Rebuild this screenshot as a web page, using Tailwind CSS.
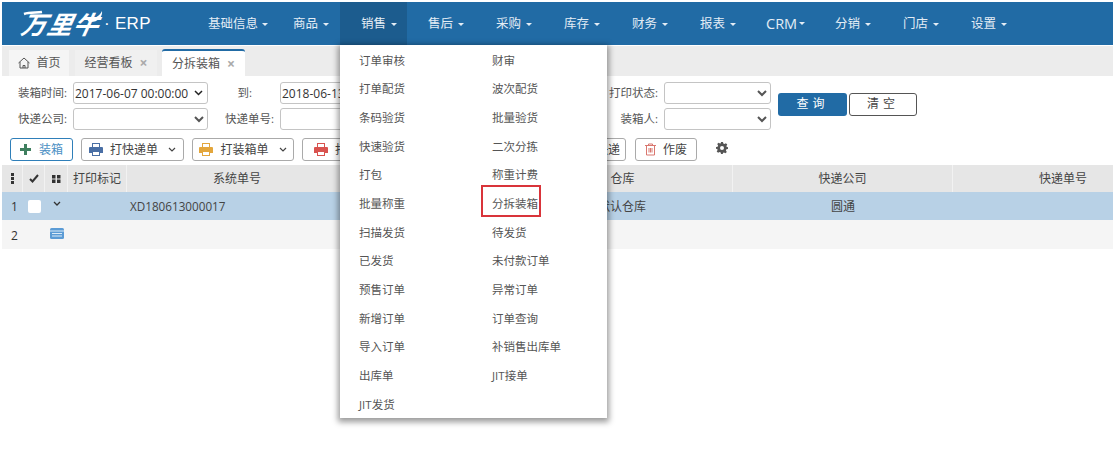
<!doctype html>
<html lang="zh-CN">
<head>
<meta charset="utf-8">
<title>ERP</title>
<script src="https://cdn.jsdelivr.net/npm/@tailwindcss/browser@4"></script>
</head>
<body class="bg-white">
<div class="relative h-[455px] w-[1113px] overflow-hidden pt-[2px] pl-[2px] font-['Open_Sans','Noto_Sans_CJK_SC',sans-serif] text-[12px] text-[#555]">

  <!-- top nav -->
  <header class="flex h-[43px] bg-[#216ba5] text-[12.5px] text-[#e4edf5]">
    <div class="flex w-[185px] items-center pl-[20px] text-white">
      <div class="relative h-[32px] w-[80px]">
        <span class="block -skew-x-12 pt-[2px] text-[25px] leading-[28px] font-bold tracking-[1px] italic">万里牛</span>
        <svg class="absolute top-0 left-0" width="84" height="26" viewBox="0 0 84 26" fill="none" aria-hidden="true">
          <path d="M2 6c6-2 13-1 18-2" stroke="#fff" stroke-width="2.5"/>
          <path d="M64 10c7 2 13-1 16-7c1 6-5 12-13 11" fill="#fff"/>
        </svg>
      </div>
      <span class="ml-[2px] font-['Liberation_Sans'] text-[17px] tracking-[0.3px]">· ERP</span>
    </div>
    <a class="flex w-[85px] items-center pt-[2px] pl-[21px]">基础信息<i class="ml-[4px] h-0 w-0 border-x-[3px] border-t-[3px] border-x-transparent border-t-[#e4edf5]"></i></a>
    <a class="flex w-[68px] items-center pt-[2px] pl-[21px]">商品<i class="ml-[5px] h-0 w-0 border-x-[3px] border-t-[3px] border-x-transparent border-t-[#e4edf5]"></i></a>
    <a class="flex w-[67px] items-center bg-[#1c5c8e] pt-[2px] pl-[21px]">销售<i class="ml-[5px] h-0 w-0 border-x-[3px] border-t-[3px] border-x-transparent border-t-[#e4edf5]"></i></a>
    <a class="flex w-[68px] items-center pt-[2px] pl-[21px]">售后<i class="ml-[5px] h-0 w-0 border-x-[3px] border-t-[3px] border-x-transparent border-t-[#e4edf5]"></i></a>
    <a class="flex w-[68px] items-center pt-[2px] pl-[21px]">采购<i class="ml-[5px] h-0 w-0 border-x-[3px] border-t-[3px] border-x-transparent border-t-[#e4edf5]"></i></a>
    <a class="flex w-[68px] items-center pt-[2px] pl-[21px]">库存<i class="ml-[5px] h-0 w-0 border-x-[3px] border-t-[3px] border-x-transparent border-t-[#e4edf5]"></i></a>
    <a class="flex w-[68px] items-center pt-[2px] pl-[21px]">财务<i class="ml-[5px] h-0 w-0 border-x-[3px] border-t-[3px] border-x-transparent border-t-[#e4edf5]"></i></a>
    <a class="flex w-[66px] items-center pt-[2px] pl-[21px]">报表<i class="ml-[5px] h-0 w-0 border-x-[3px] border-t-[3px] border-x-transparent border-t-[#e4edf5]"></i></a>
    <a class="flex w-[69px] items-center pl-[21px]"><span class="text-[14.5px]">CRM</span><i class="ml-[2px] h-0 w-0 border-x-[3px] border-t-[3px] border-x-transparent border-t-[#e4edf5]"></i></a>
    <a class="flex w-[68px] items-center pt-[2px] pl-[21px]">分销<i class="ml-[5px] h-0 w-0 border-x-[3px] border-t-[3px] border-x-transparent border-t-[#e4edf5]"></i></a>
    <a class="flex w-[68px] items-center pt-[2px] pl-[21px]">门店<i class="ml-[5px] h-0 w-0 border-x-[3px] border-t-[3px] border-x-transparent border-t-[#e4edf5]"></i></a>
    <a class="flex w-[68px] items-center pt-[2px] pl-[21px]">设置<i class="ml-[5px] h-0 w-0 border-x-[3px] border-t-[3px] border-x-transparent border-t-[#e4edf5]"></i></a>
  </header>

  <!-- tabs -->
  <div class="mt-[1px] flex h-[30px] items-end bg-[#ececec] pl-[7px]">
    <div class="flex h-[26px] w-[60px] items-center justify-center gap-[5px] bg-[#f5f5f5]">
      <svg width="14" height="14" viewBox="0 0 14 14" fill="none" stroke="#555" stroke-width="1" aria-hidden="true"><path d="M1.5 7 7 2l5.500 5M3 6v6h8V6M6 12V9.500h2V12"/></svg>
      <span>首页</span>
    </div>
    <div class="ml-[6px] flex h-[26px] w-[82px] items-center justify-center gap-[7px] bg-[#f0f0f0]">
      <span>经营看板</span><span class="text-[14px] leading-none font-bold text-[#aaa]">×</span>
    </div>
    <div class="ml-[5px] flex h-[27px] w-[83px] items-center justify-center gap-[7px] rounded-t-[3px] border-t-2 border-[#216ba5] bg-white">
      <span>分拆装箱</span><span class="text-[14px] leading-none font-bold text-[#aaa]">×</span>
    </div>
  </div>

  <!-- filters -->
  <div class="mt-[6px] flex items-center">
    <div class="grid grid-cols-[71px_135px_72px_135px_249px_107px] items-center gap-y-[4px] text-[11.5px] leading-[22px]">
      <label class="pr-[6px] text-right">装箱时间:</label>
      <div class="relative">
        <select class="block h-[22px] w-full appearance-none rounded-[3px] border border-[#c4c4c4] bg-white pl-[1px] text-[12px] text-[#333]"><option>2017-06-07 00:00:00</option></select>
        <svg class="pointer-events-none absolute top-[8px] right-[5px]" width="9" height="6" viewBox="0 0 9 6" fill="none" stroke="#222" stroke-width="1.500" aria-hidden="true"><path d="M1 1l3.500 3.500L8 1"/></svg>
      </div>
      <label class="pr-[28px] text-right">到:</label>
      <select class="block h-[22px] w-full appearance-none rounded-[3px] border border-[#c4c4c4] bg-white pl-[1px] text-[12px] text-[#333]"><option>2018-06-13 00:00:00</option></select>
      <label class="pr-[6px] text-right">打印状态:</label>
      <select class="h-[22px] rounded-[3px] border border-[#c4c4c4] bg-white"><option></option></select>
      <label class="pr-[6px] text-right">快递公司:</label>
      <select class="h-[22px] rounded-[3px] border border-[#c4c4c4] bg-white"><option></option></select>
      <label class="pr-[6px] text-right">快递单号:</label>
      <input class="h-[22px] rounded-[3px] border border-[#c4c4c4] bg-white">
      <label class="pr-[6px] text-right">装箱人:</label>
      <select class="h-[22px] rounded-[3px] border border-[#c4c4c4] bg-white"><option></option></select>
    </div>
    <button class="mt-[-4px] ml-[7px] h-[23px] w-[69px] rounded-[3px] bg-[#216ba5] tracking-[4px] text-white">查询</button>
    <button class="mt-[-4px] ml-[2px] h-[23px] w-[68px] rounded-[3px] border border-[#555] bg-white tracking-[4px] text-[#444]">清空</button>
  </div>

  <!-- toolbar -->
  <div class="mt-[8px] flex h-[23px] items-center pl-[8px] text-[#444]">
    <button class="flex h-[23px] w-[63px] items-center justify-center gap-[8px] rounded-[3px] border border-[#2f7fb9] text-[#4a8fc4]">
      <svg width="11" height="11" viewBox="0 0 11 11" aria-hidden="true"><path fill="#3f7f5f" d="M4 0h3v4h4v3H7v4H4V7H0V4h4z"/></svg>
      <span>装箱</span>
    </button>
    <button class="ml-[8px] flex h-[23px] w-[103px] items-center justify-center gap-[7px] rounded-[3px] border border-[#aaa]">
      <svg width="14" height="13" viewBox="0 0 14 13" aria-hidden="true"><path fill="#4a6fa5" d="M3 0h8v4h2a1 1 0 0 1 1 1v5h-3v3H3v-3H0V5a1 1 0 0 1 1-1h2zm1 1v3h6V1zm0 8v3h6V9z"/></svg>
      <span>打快递单</span>
      <svg class="ml-[3px]" width="8" height="5" viewBox="0 0 8 5" fill="none" stroke="#444" stroke-width="1.200" aria-hidden="true"><path d="M1 1l3 3 3-3"/></svg>
    </button>
    <button class="ml-[8px] flex h-[23px] w-[102px] items-center justify-center gap-[7px] rounded-[3px] border border-[#aaa]">
      <svg width="14" height="13" viewBox="0 0 14 13" aria-hidden="true"><path fill="#e3a63c" d="M3 0h8v4h2a1 1 0 0 1 1 1v5h-3v3H3v-3H0V5a1 1 0 0 1 1-1h2zm1 1v3h6V1zm0 8v3h6V9z"/></svg>
      <span>打装箱单</span>
      <svg class="ml-[3px]" width="8" height="5" viewBox="0 0 8 5" fill="none" stroke="#444" stroke-width="1.200" aria-hidden="true"><path d="M1 1l3 3 3-3"/></svg>
    </button>
    <button class="ml-[8px] flex h-[23px] w-[108px] items-center gap-[7px] rounded-[3px] border border-[#aaa] pl-[11px]">
      <svg width="14" height="13" viewBox="0 0 14 13" aria-hidden="true"><path fill="#d9534f" d="M3 0h8v4h2a1 1 0 0 1 1 1v5h-3v3H3v-3H0V5a1 1 0 0 1 1-1h2zm1 1v3h6V1zm0 8v3h6V9z"/></svg>
      <span>打印</span>
    </button>
    <button class="ml-[8px] flex h-[23px] w-[208px] items-center justify-end rounded-[3px] border border-[#aaa] pr-[5px]">更换快递</button>
    <button class="ml-[9px] flex h-[23px] w-[62px] items-center justify-center gap-[7px] rounded-[3px] border border-[#aaa]">
      <svg width="11" height="13" viewBox="0 0 11 13" fill="none" stroke="#d9776f" stroke-width="1" aria-hidden="true"><path d="M0 2.500h11M3.500 2.500V1h4v1.500M1.500 2.500V12h8V2.500M4 5v4.500M5.500 5v4.500M7 5v4.500"/></svg>
      <span>作废</span>
    </button>
    <svg class="mt-[-4px] ml-[19px]" width="12" height="12" viewBox="0 0 12 12" aria-hidden="true"><path fill="#555" fill-rule="evenodd" d="M5 0h2l.3 1.600 1.200.5L9.900 1.200l1.400 1.400-.9 1.400.5 1.200L12 5v2l-1.600.3-.5 1.200.9 1.400-1.400 1.400-1.400-.9-1.200.5L7 12H5l-.3-1.600-1.200-.5-1.400.9L.7 9.400l.9-1.400-.5-1.200L0 7V5l1.600-.3.5-1.200-.9-1.400L2.600.7 4 1.600l.8-.4zM6 4a2 2 0 1 0 0 4 2 2 0 0 0 0-4z"/></svg>
  </div>

  <!-- table -->
  <div class="mt-[4px] w-[1171px] text-[#444]">
    <div class="flex h-[27px] items-center bg-[#e6e6e6] text-center">
      <div class="flex h-full w-[21px] items-center justify-center border-r border-[#f2f2f2]">
        <svg width="3" height="11" viewBox="0 0 3 11" aria-hidden="true"><path fill="#333" d="M0 0h3v3H0zM0 4h3v3H0zM0 8h3v3H0z"/></svg>
      </div>
      <div class="flex h-full w-[22px] items-center justify-center border-r border-[#f2f2f2]">
        <svg width="10" height="9" viewBox="0 0 10 9" fill="none" stroke="#333" stroke-width="2" aria-hidden="true"><path d="M1 5l2.500 2.500L9 1"/></svg>
      </div>
      <div class="flex h-full w-[23px] items-center justify-center border-r border-[#f2f2f2]">
        <svg width="9" height="8" viewBox="0 0 9 8" aria-hidden="true"><path fill="#333" d="M0 0h3.500v3.500H0zM5 0h3.500v3.500H5zM0 4.500h3.500V8H0zM5 4.500h3.500V8H5z"/></svg>
      </div>
      <div class="flex h-full w-[59px] items-center justify-center border-r border-[#f2f2f2]">打印标记</div>
      <div class="flex h-full w-[221px] items-center justify-center border-r border-[#f2f2f2]">系统单号</div>
      <div class="h-full w-[165px] border-r border-[#f2f2f2]"></div>
      <div class="flex h-full w-[220px] items-center justify-center border-r border-[#f2f2f2]">仓库</div>
      <div class="flex h-full w-[220px] items-center justify-center border-r border-[#f2f2f2]">快递公司</div>
      <div class="flex h-full w-[220px] items-center justify-center">快递单号</div>
    </div>
    <div class="flex h-[28px] items-center bg-[#b8d1e6]">
      <div class="w-[21px] pt-[2px] pl-[9px] text-[#333]">1</div>
      <div class="flex w-[22px] justify-center"><span class="h-[13px] w-[13px] rounded-[2px] bg-white"></span></div>
      <div class="flex w-[23px] justify-center pb-[5px]">
        <svg width="8" height="5" viewBox="0 0 8 5" fill="none" stroke="#333" stroke-width="1.300" aria-hidden="true"><path d="M1 1l3 3 3-3"/></svg>
      </div>
      <div class="w-[59px]"></div>
      <div class="w-[221px] pt-[2px] pl-[3px] text-[11.7px]">XD180613000017</div>
      <div class="w-[165px]"></div>
      <div class="w-[220px] pt-[2px] pl-[85px]">默认仓库</div>
      <div class="w-[220px] pt-[2px] text-center">圆通</div>
    </div>
    <div class="flex h-[29px] items-center bg-[#f5f5f5]">
      <div class="w-[21px] pt-[2px] pl-[9px] text-[#333]">2</div>
      <div class="w-[22px]"></div>
      <div class="flex w-[23px] justify-center">
        <svg class="mt-[-3px]" width="14" height="11" viewBox="0 0 14 11" aria-hidden="true"><rect width="14" height="11" rx="1.500" fill="#5b9bd5"/><path fill="#dcebf7" d="M0 2.500h14V3.500H0zM2 5h10v1H2zM2 7.500h10v1H2z"/></svg>
      </div>
    </div>
  </div>

  <!-- sales dropdown -->
  <nav class="absolute top-[45px] left-[340px] grid h-[373px] w-[267px] grid-cols-[133px_1fr] auto-rows-[28.67px] items-center bg-white pt-px pl-[19px] text-[11.5px] shadow-[0_2px_6px_2px_rgba(0,0,0,0.4)]">
    <a>订单审核</a><a>财审</a>
    <a>打单配货</a><a>波次配货</a>
    <a>条码验货</a><a>批量验货</a>
    <a>快速验货</a><a>二次分拣</a>
    <a>打包</a><a>称重计费</a>
    <a>批量称重</a>
    <a class="relative">分拆装箱<span class="absolute top-[-10px] left-[-11px] h-[32px] w-[60px] border-2 border-[#d9343a]"></span></a>
    <a>扫描发货</a><a>待发货</a>
    <a>已发货</a><a>未付款订单</a>
    <a>预售订单</a><a>异常订单</a>
    <a>新增订单</a><a>订单查询</a>
    <a>导入订单</a><a>补销售出库单</a>
    <a>出库单</a><a>JIT接单</a>
    <a>JIT发货</a>
  </nav>
</div>
</body>
</html>
